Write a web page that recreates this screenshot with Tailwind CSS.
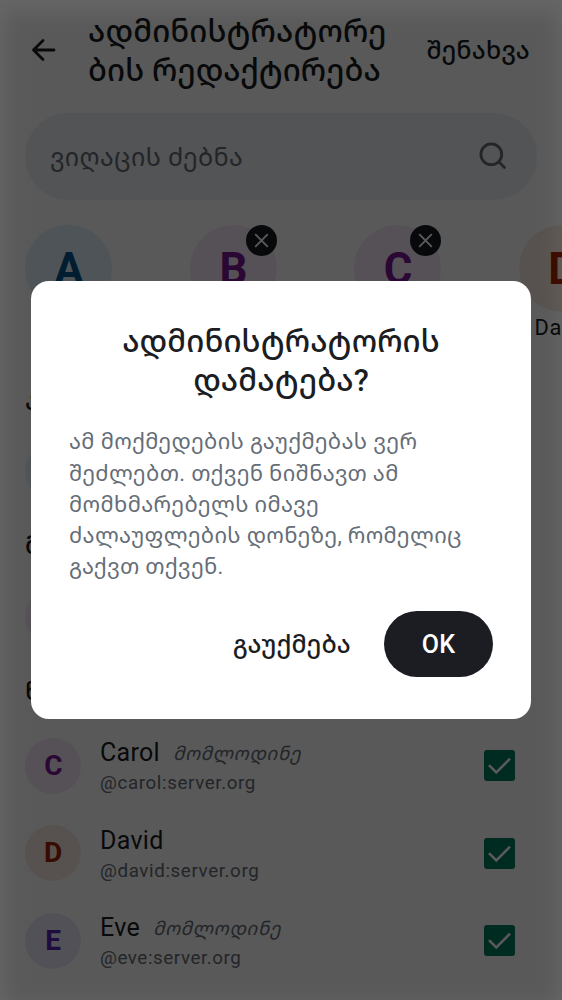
<!DOCTYPE html>
<html lang="ka">
<head>
<meta charset="utf-8">
<meta name="viewport" content="width=device-width, initial-scale=1">
<title>ადმინისტრატორების რედაქტირება</title>
<script src="https://cdn.jsdelivr.net/npm/@tailwindcss/browser@4"></script>
</head>
<body class="font-[Roboto,'Noto_Sans_Georgian','Noto_Sans',sans-serif] bg-white">
<div class="relative w-[562px] h-[1000px] overflow-hidden bg-white text-[#1b1d22]">
  <header class="flex items-start h-[113px] pl-[29px] pr-[32px]">
    <svg class="mt-[35px] w-[30px] h-[30px] shrink-0" viewBox="0 0 30 30" fill="none" stroke="currentColor" stroke-width="2.8" stroke-linecap="round" stroke-linejoin="round"><path d="M25 15H4.5M14 5.5L4.5 15l9.5 9.5"/></svg>
    <h1 class="mt-[12px] ml-[29px] w-[310px] text-[31px] leading-[39px] tracking-[0.08px] font-medium whitespace-nowrap">ადმინისტრატორე<br>ბის რედაქტირება</h1>
    <div class="mt-[36px] ml-auto text-[25px] leading-[30px] tracking-[0.25px] font-medium whitespace-nowrap">შენახვა</div>
  </header>
  <div class="mx-[25px] h-[87px] rounded-full bg-[#eceff3] flex items-center justify-between pl-[25px] pr-[28px] text-[#656d77]">
    <span class="text-[25px] tracking-[0.4px] pt-[3px]">ვიღაცის ძებნა</span>
    <svg class="mb-[2px] w-[32px] h-[32px]" viewBox="0 0 32 32" fill="none" stroke="currentColor" stroke-width="2.8" stroke-linecap="round"><circle cx="14.3" cy="14.3" r="10.4"/><path d="M22 22l5.5 5.5"/></svg>
  </div>
  <div class="mt-[25px] ml-[25px] flex gap-[77.5px] h-[137px] text-[43.75px] font-bold">
    <div class="w-[87px] h-[87px] shrink-0 rounded-full bg-[#def1f7] text-[#00548c] flex items-center justify-center pt-[2px] pl-px">A</div>
    <div class="relative w-[87px] h-[87px] shrink-0 rounded-full bg-[#f4e8f6] text-[#7a1494] flex items-center justify-center pt-[2px] pl-px">B
      <svg class="absolute right-0 top-0 w-[31px] h-[31px]" viewBox="0 0 31 31"><circle cx="15.5" cy="15.5" r="15.5" fill="#1b1d22"/><path d="M9.7 9.7l11.6 11.6M21.3 9.7L9.7 21.3" stroke="#fff" stroke-width="1.9" stroke-linecap="round"/></svg>
    </div>
    <div class="relative w-[87px] h-[87px] shrink-0 rounded-full bg-[#f4e8f6] text-[#7a1494] flex items-center justify-center pt-[2px] pl-px">C
      <svg class="absolute right-0 top-0 w-[31px] h-[31px]" viewBox="0 0 31 31"><circle cx="15.5" cy="15.5" r="15.5" fill="#1b1d22"/><path d="M9.7 9.7l11.6 11.6M21.3 9.7L9.7 21.3" stroke="#fff" stroke-width="1.9" stroke-linecap="round"/></svg>
    </div>
    <div class="w-[87px] shrink-0">
      <div class="w-[87px] h-[87px] rounded-full bg-[#f9eae0] text-[#a02400] flex items-center justify-center pt-[2px] pl-px">D</div>
      <div class="mt-[3px] pl-[3px] text-center text-[21.8px] leading-[26px] font-normal tracking-[0.8px]">David</div>
    </div>
  </div>
  <h2 class="mt-[24px] ml-[25px] h-[32px] text-[25px] leading-[32px] font-medium">ადმინები</h2>
  <div class="mt-[25px] ml-[25px] w-[56px] h-[56px] rounded-full bg-[#def1f7]"></div>
  <h2 class="mt-[31px] ml-[25px] h-[32px] text-[25px] leading-[32px] font-medium">მოდერატორები</h2>
  <div class="mt-[27px] ml-[25px] w-[56px] h-[56px] rounded-full bg-[#f4e8f6]"></div>
  <h2 class="mt-[31px] ml-[25px] h-[32px] text-[25px] leading-[32px] font-medium">წევრები</h2>
  <ul class="mt-[14px]">
    <li class="flex items-center h-[87.5px] pl-[25px] pr-[47px]">
      <div class="w-[56px] h-[56px] rounded-full bg-[#f4e8f6] text-[#7a1494] text-[28px] font-bold flex items-center justify-center pl-px">C</div>
      <div class="ml-[19px] flex-1">
        <div class="flex items-start h-[31px] leading-[33px] whitespace-nowrap"><span class="text-[25px] tracking-[0.3px]">Carol</span><i class="ml-[13px] pt-[2px] text-[18.75px] tracking-[0.6px] text-[#656d77]">მომლოდინე</i></div>
        <div class="h-[28px] leading-[32px] text-[18.75px] tracking-[0.62px] text-[#656d77]">@carol:server.org</div>
      </div>
      <svg class="w-[31px] h-[31px]" viewBox="0 0 31 31"><rect width="31" height="31" rx="3" fill="#007a5c"/><path d="M5 15.2l7.3 7.3L26 8.7" fill="none" stroke="#fff" stroke-width="2.6"/></svg>
    </li>
    <li class="flex items-center h-[87.5px] pl-[25px] pr-[47px]">
      <div class="w-[56px] h-[56px] rounded-full bg-[#f9eae0] text-[#a02400] text-[28px] font-bold flex items-center justify-center">D</div>
      <div class="ml-[19px] flex-1">
        <div class="flex items-start h-[31px] leading-[33px] whitespace-nowrap"><span class="text-[25px] tracking-[0.3px]">David</span></div>
        <div class="h-[28px] leading-[32px] text-[18.75px] tracking-[0.62px] text-[#656d77]">@david:server.org</div>
      </div>
      <svg class="w-[31px] h-[31px]" viewBox="0 0 31 31"><rect width="31" height="31" rx="3" fill="#007a5c"/><path d="M5 15.2l7.3 7.3L26 8.7" fill="none" stroke="#fff" stroke-width="2.6"/></svg>
    </li>
    <li class="flex items-center h-[87.5px] pl-[25px] pr-[47px]">
      <div class="w-[56px] h-[56px] rounded-full bg-[#ebe8fb] text-[#5423b0] text-[28px] font-bold flex items-center justify-center">E</div>
      <div class="ml-[19px] flex-1">
        <div class="flex items-start h-[31px] leading-[33px] whitespace-nowrap"><span class="text-[25px] tracking-[0.3px]">Eve</span><i class="ml-[13px] pt-[2px] text-[18.75px] tracking-[0.6px] text-[#656d77]">მომლოდინე</i></div>
        <div class="h-[28px] leading-[32px] text-[18.75px] tracking-[0.58px] text-[#656d77]">@eve:server.org</div>
      </div>
      <svg class="w-[31px] h-[31px]" viewBox="0 0 31 31"><rect width="31" height="31" rx="3" fill="#007a5c"/><path d="M5 15.2l7.3 7.3L26 8.7" fill="none" stroke="#fff" stroke-width="2.6"/></svg>
    </li>
  </ul>

  <div class="absolute inset-0 bg-black/60"></div>
  <div class="absolute inset-x-[5px] top-[12px] -bottom-[4px] bg-black/12 blur-[10px]"></div>
  <section role="dialog" class="absolute left-[31px] top-[281px] w-[500px] h-[438px] rounded-[18px] bg-white pl-[38px] pr-[38px] pt-[41px]">
    <h2 class="text-center text-[31px] leading-[39px] tracking-[0.08px] font-medium whitespace-nowrap">ადმინისტრატორის<br>დამატება?</h2>
    <p class="mt-[26.4px] text-[21.9px] leading-[31.25px] tracking-[0.33px] text-[#656d77] whitespace-nowrap">ამ მოქმედების გაუქმებას ვერ<br>შეძლებთ. თქვენ ნიშნავთ ამ<br>მომხმარებელს იმავე<br>ძალაუფლების დონეზე, რომელიც<br>გაქვთ თქვენ.</p>
    <div class="mt-[28.6px] flex items-center justify-end gap-[33px] font-medium text-[25px]">
      <span class="whitespace-nowrap tracking-[0.15px] pt-[2px]">გაუქმება</span>
      <span class="w-[109px] h-[66px] rounded-full bg-[#1b1d22] text-white flex items-center justify-center tracking-[0.3px] pt-px">OK</span>
    </div>
  </section>
</div>
</body>
</html>
